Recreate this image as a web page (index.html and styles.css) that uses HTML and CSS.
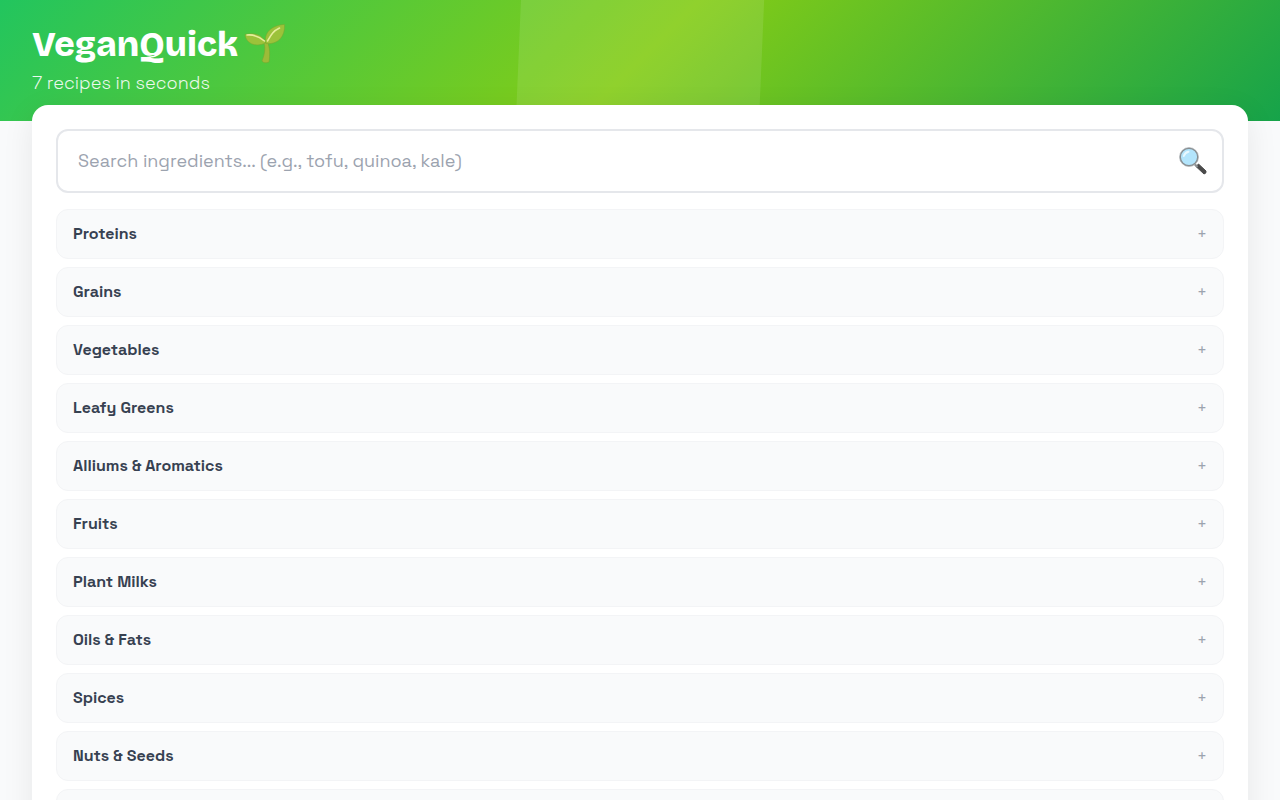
FILE: index.html
```html
<!DOCTYPE html>
<html lang="en">
<head>
<meta charset="utf-8">
<meta name="viewport" content="width=device-width, initial-scale=1">
<title>VeganQuick</title>
<link rel="stylesheet" href="styles.css">
</head>
<body>
<header class="hero">
  <h1 class="brand">VeganQuick
    <svg class="sprout" viewBox="0 0 42 42" aria-hidden="true">
      <path d="M20 20 C22 26 20 33 18 38 Q20 41 25 39 C26 32 26 25 23.500 19 Z" fill="#9cbb38" stroke="#79a52e" stroke-width=".5"/>
      <path d="M21.500 20 C19 12 10 9 1 11.500 C2 20 11 25 21.500 20 Z" fill="#9cc23a" stroke="#79a52e" stroke-width=".5"/>
      <path d="M22 20.500 C19 10 28 2 40.500 1.500 C41.500 14 33 22 22 20.500 Z" fill="#9cc23a" stroke="#79a52e" stroke-width=".5"/>
      <path d="M3 12 Q12 11 20.500 18" fill="none" stroke="#e6ee9c" stroke-width="1.600" stroke-linecap="round"/>
      <path d="M23.500 18 C27 12 29 8 35.500 5" fill="none" stroke="#e6ee9c" stroke-width="1.600" stroke-linecap="round"/>
    </svg>
  </h1>
  <p class="tagline">7 recipes in seconds</p>
</header>
<main class="panel">
  <form class="search" role="search">
    <input class="search-input" type="search" aria-label="Search ingredients" placeholder="Search ingredients... (e.g., tofu, quinoa, kale)">
    <svg class="search-icon" viewBox="0 0 28 28" aria-hidden="true">
      <path d="M17 19.500 L19.500 17 L27 24 Q27.500 26.500 25 27 Z" fill="#4b4b4b" stroke="#4b4b4b" stroke-linejoin="round"/>
      <path d="M15 16.500 L18.500 20" stroke="#8a8f91" stroke-width="2.200"/>
      <circle cx="10" cy="10" r="8.800" fill="#b3e5fc" stroke="#858b8e" stroke-width="1.500"/>
      <circle cx="10" cy="10" r="9.500" fill="none" stroke="#b0b5b8" stroke-width=".6"/>
      <path d="M4.800 9 Q6 5.500 9.500 4.800" fill="none" stroke="#e8f8ff" stroke-width="2" stroke-linecap="round"/>
    </svg>
  </form>
  <div class="categories">
    <button class="category" type="button">Proteins<span class="plus">+</span></button>
    <button class="category" type="button">Grains<span class="plus">+</span></button>
    <button class="category" type="button">Vegetables<span class="plus">+</span></button>
    <button class="category" type="button">Leafy Greens<span class="plus">+</span></button>
    <button class="category" type="button">Alliums &amp; Aromatics<span class="plus">+</span></button>
    <button class="category" type="button">Fruits<span class="plus">+</span></button>
    <button class="category" type="button">Plant Milks<span class="plus">+</span></button>
    <button class="category" type="button">Oils &amp; Fats<span class="plus">+</span></button>
    <button class="category" type="button">Spices<span class="plus">+</span></button>
    <button class="category" type="button">Nuts &amp; Seeds<span class="plus">+</span></button>
    <div class="category"></div>
  </div>
</main>
</body>
</html>
```
FILE: styles.css
```css
* { box-sizing: border-box; }

body {
  margin: 0;
  background: #f9fafb;
  font-family: "Space Grotesk", Inter, sans-serif;
  color: #374151;
}

.hero {
  position: relative;
  padding: 24px 32px;
  background: linear-gradient(135deg, #22c55e 0%, #84cc16 50%, #16a34a 100%);
  color: #fff;
}

/* Slanted light band across the header */
.hero::before {
  content: "";
  position: absolute;
  inset: 0;
  background: rgba(255, 255, 255, 0.1);
  clip-path: polygon(40.7% 0, 59.7% 0, 59.3% 100%, 40.3% 100%);
}

.brand {
  display: flex;
  align-items: center;
  gap: 6px;
  height: 40px;
  margin: 0 0 4px;
  font-family: "Bricolage Grotesque", Inter, sans-serif;
  font-size: 35px;
  font-weight: 800;
  line-height: 40px;
}

.sprout { width: 42px; height: 42px; }

.tagline {
  margin: 0;
  font-size: 18px;
  font-weight: 300;
  line-height: 29px;
  opacity: 0.9;
}

.panel {
  position: relative;
  margin: -16px 32px 0;
  padding: 24px;
  background: #fff;
  border-radius: 16px;
  box-shadow: 0 8px 32px rgba(0, 0, 0, 0.08);
}

.search { position: relative; margin-bottom: 16px; }

.search-input {
  display: block;
  width: 100%;
  height: 64px;
  padding: 0 56px 2px 20px;
  border: 2px solid #e5e7eb;
  border-radius: 12px;
  background: #fff;
  font: 400 18px "Space Grotesk", Inter, sans-serif;
  color: #374151;
  appearance: none;
}

.search-input::placeholder { color: #9ca3af; opacity: 1; }

.search-icon {
  position: absolute;
  right: 17px;
  top: 18px;
  width: 28px;
  height: 28px;
}

.categories { display: grid; gap: 8px; }

.category {
  display: flex;
  align-items: center;
  justify-content: space-between;
  min-height: 50px;
  padding: 0 16px 2px;
  border: 1px solid #f3f4f6;
  border-radius: 12px;
  background: #f9fafb;
  font: 600 16px "Space Grotesk", Inter, sans-serif;
  color: #374151;
  text-align: left;
}

.plus { font-size: 16px; font-weight: 400; color: #9ca3af; }
```
